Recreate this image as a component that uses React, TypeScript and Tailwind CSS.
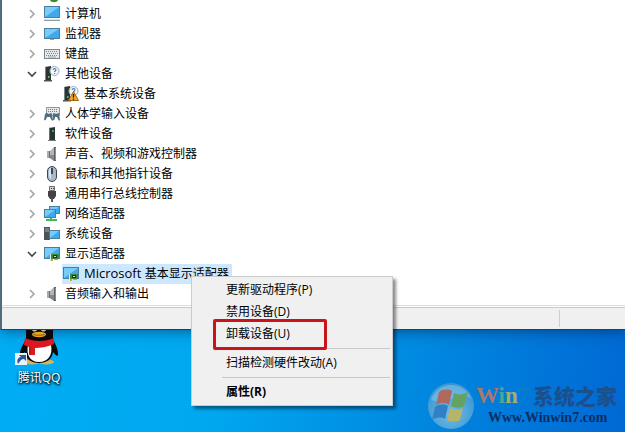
import type { ReactNode } from "react";

const Screen = ({ x = 0, y = 0, w = 16, h = 11 }) => (
  <g>
    <rect x={x} y={y} width={w} height={h} fill="#4b7d9c" />
    <rect x={x + 1} y={y + 1} width={w - 2} height={h - 2} fill="#3fa9ec" />
    <path
      d={`M${x + 1} ${y + h - 1}V${y + 1}H${x + w - 1}Z`}
      fill="#78ccfa"
    />
  </g>
);

const Tower = ({ question = false }) => (
  <g>
    <path d="M1 1l6-1v14H1z" fill="#2d3434" />
    <path d="M1 1l1-.3V14H1z" fill="#7b8787" />
    <path d="M0 14h8v1.500H0z" fill="#4d5353" />
    <rect x="4" y="10" width="1.500" height="2" fill="#52c46b" />
    {question && (
      <g>
        <circle cx="10.500" cy="5" r="4.500" fill="#f2f7fc" stroke="#9cacb9" />
        <path
          d="M9.200 4c0-2 2.900-1.800 2.700 0-.1 1-1.300 1-1.300 2.100M10.600 7v.9"
          fill="none"
          stroke="#3679ae"
          strokeWidth="1.100"
        />
      </g>
    )}
  </g>
);

const Speaker = () => (
  <g>
    <path d="M3 5h4v7H3z" fill="#6b6e70" />
    <path d="M3 5h2v7H3z" fill="#a9acae" />
    <path d="M6 5l4-4v14l-4-3z" fill="#b4b7b9" />
    <path d="M6 9h4v6l-4-3z" fill="#85898b" />
    <path d="M10 1h2v14h-2z" fill="#5e6264" />
    <path d="M11 2h1v12h-1z" fill="#8c9092" />
  </g>
);

const DisplayCard = () => (
  <g>
    <Screen y={1} h={12} />
    <path d="M6 8h1v7H6z" fill="#dfe5df" />
    <path d="M7 8h8v5H7z" fill="#3d8a3c" />
    <path d="M9 9h4v3H9z" fill="#1e3520" />
    <path d="M10 10h2v1h-2z" fill="#d9e2cf" />
    <path d="M7 13h2v2H7zM10 13h4v1h-4z" fill="#d2a62e" />
  </g>
);

const icons: Record<string, ReactNode> = {
  computer: (
    <g>
      <Screen y={0} h={12} />
      <path d="M0 14h16v1H0z" fill="#8f9ca4" />
      <path d="M0 13h16v1H0z" fill="#dbe3e8" />
    </g>
  ),
  monitor: (
    <g>
      <Screen y={2} h={11} />
      <path d="M6 13h4v1H6z" fill="#9aa7ae" />
    </g>
  ),
  keyboard: (
    <g>
      <rect x=".5" y="3.500" width="15" height="9" fill="#e6e9eb" stroke="#7d868b" />
      <path
        d="M2 5.500h12M3 7.500h11M2 9.500h12"
        stroke="#7b858b"
        strokeDasharray="1 1"
      />
      <path d="M4 11h8" stroke="#9ba3a8" />
    </g>
  ),
  unknown: <Tower question />,
  warning: (
    <g>
      <Tower question />
      <path d="M10.500 5.500L15.500 14.500h-10z" fill="#f3a72b" stroke="#a16512" />
      <path d="M10.500 8v3.500M10.500 12.500v1.200" stroke="#261b08" strokeWidth="1.300" />
    </g>
  ),
  hid: (
    <g>
      <path d="M2.500 1.500h13v8h-13z" fill="#e4e8ea" stroke="#8b989f" />
      <path d="M4 3.500h10M4 5.500h10" stroke="#75838c" strokeDasharray="1 1" />
      <path
        d="M1 8c2-2 3 0 4 0s2-2 3 0l1 6c-1 2-2-1-3-3H3c-1 2-1 4-3 3zM9 8c1-2 2 0 3 0s3-2 3 0l1 6c-1 2-2-1-3-3h-2c0 2-1 4-2 3z"
        fill="#536f7f"
      />
    </g>
  ),
  software: (
    <g>
      <path d="M5 2l6-1v13H5z" fill="#293431" />
      <path d="M5 2l1-.2V14H5z" fill="#66716e" />
      <path d="M4 14h8v1H4z" fill="#737c79" />
      <path d="M8 4h2v2H8z" fill="#43a351" />
    </g>
  ),
  speaker: <Speaker />,
  mouse: (
    <g>
      <rect x="3.500" y=".5" width="9" height="15" rx="4.500" fill="#a9b9ca" stroke="#3c4651" />
      <path d="M5 5c0-2 1-3 2-3v11c-2-1-2-4-2-7z" fill="#dce7f1" />
      <path d="M8 2v6" stroke="#242c34" strokeWidth="1.600" />
    </g>
  ),
  usb: (
    <g>
      <path d="M5.500.5h5v4h-5z" fill="#d7d7d7" stroke="#6e6e6e" />
      <path d="M7 2h1v1H7zM9 2h1v1H9z" fill="#333" />
      <path d="M4 5h8v5l-2 3H6l-2-3z" fill="#434343" />
      <path d="M8 12v4" stroke="#555" strokeWidth="2" />
    </g>
  ),
  network: (
    <g>
      <Screen x={5} y={0} w={11} h={8} />
      <Screen x={0} y={3} w={12} h={9} />
      <path d="M2 14h11M7 12v3" stroke="#42b65a" strokeWidth="2" />
    </g>
  ),
  system: (
    <g>
      <path d="M0 1h6v13H0z" fill="#4a5357" />
      <path d="M1 3h4M1 5h4" stroke="#a3adb1" />
      <Screen x={5} y={4} w={11} h={9} />
    </g>
  ),
  display: <DisplayCard />,
};

type Device = {
  name: string;
  icon: string;
  open?: boolean;
  child?: { vendor?: string; name: string; icon: string; selected?: boolean };
};

const devices: Device[] = [
  { name: "计算机", icon: "computer" },
  { name: "监视器", icon: "monitor" },
  { name: "键盘", icon: "keyboard" },
  {
    name: "其他设备",
    icon: "unknown",
    open: true,
    child: { name: "基本系统设备", icon: "warning" },
  },
  { name: "人体学输入设备", icon: "hid" },
  { name: "软件设备", icon: "software" },
  { name: "声音、视频和游戏控制器", icon: "speaker" },
  { name: "鼠标和其他指针设备", icon: "mouse" },
  { name: "通用串行总线控制器", icon: "usb" },
  { name: "网络适配器", icon: "network" },
  { name: "系统设备", icon: "system" },
  {
    name: "显示适配器",
    icon: "display",
    open: true,
    child: {
      vendor: "Microsoft",
      name: "基本显示适配器",
      icon: "display",
      selected: true,
    },
  },
  { name: "音频输入和输出", icon: "speaker" },
];

const DeviceIcon = ({ name }: { name: string }) => (
  <svg className="size-4 shrink-0" viewBox="0 0 16 16" aria-hidden="true">
    {icons[name]}
  </svg>
);

const DeviceTree = () => (
  <ul role="tree" aria-label="设备管理器" className="pl-6">
    {devices.map((device) => (
      <li key={device.name} role="treeitem" aria-expanded={!!device.open}>
        <div className="flex h-5 items-center">
          <button
            type="button"
            aria-label={device.name}
            className="flex size-4 items-center justify-center"
          >
            <svg className="size-3" viewBox="0 0 12 12" fill="none" aria-hidden="true">
              {device.open ? (
                <path d="M2 4l4 4 4-4" stroke="#444" strokeWidth="1.600" />
              ) : (
                <path d="M4 2l4 4-4 4" stroke="#a3a3a3" strokeWidth="1.600" />
              )}
            </svg>
          </button>
          <span className="ml-1 flex items-center gap-[5px]">
            <DeviceIcon name={device.icon} />
            {device.name}
          </span>
        </div>
        {device.child && (
          <ul role="group" className="pl-[38px]">
            <li
              role="treeitem"
              className={
                device.child.selected
                  ? "flex h-5 w-fit items-center gap-[5px] bg-[#cce8ff] pr-[3px] pl-px"
                  : "flex h-5 w-fit items-center gap-[5px] pr-[3px] pl-px"
              }
            >
              <DeviceIcon name={device.child.icon} />
              <span>
                {device.child.vendor && (
                  <span className="text-[13px]">{device.child.vendor} </span>
                )}
                {device.child.name}
              </span>
            </li>
          </ul>
        )}
      </li>
    ))}
  </ul>
);

const itemClass = "block h-[22px] w-full pl-8 text-left hover:bg-[#91c9f7]";

const ContextMenu = () => (
  <div
    role="menu"
    className="absolute top-[276px] left-[191px] w-[202px] border border-[#ccc] bg-[#f0f0f0] px-0.5 py-0.5 shadow-[3px_3px_3px_rgba(0,0,0,0.45)]"
  >
    <button type="button" role="menuitem" className={itemClass}>
      更新驱动程序(P)
    </button>
    <button type="button" role="menuitem" className={itemClass}>
      禁用设备(D)
    </button>
    <div className="relative">
      <button type="button" role="menuitem" className={itemClass}>
        卸载设备(U)
      </button>
      <span className="pointer-events-none absolute -top-1 left-[19px] h-[31px] w-[114px] rounded-xs border-3 border-[#c9141b]" />
    </div>
    <div role="separator" className="my-[3px] ml-7 h-px bg-[#c8c8c8]" />
    <button type="button" role="menuitem" className={itemClass}>
      扫描检测硬件改动(A)
    </button>
    <div role="separator" className="my-[3px] ml-7 h-px bg-[#c8c8c8]" />
    <button type="button" role="menuitem" className={`${itemClass} font-bold`}>
      属性(R)
    </button>
  </div>
);

const QQShortcut = () => (
  <button type="button" className="ml-3 flex w-[54px] flex-col items-center">
    <svg className="h-[38px] w-12" viewBox="0 2 48 38" aria-hidden="true">
      <ellipse cx="17" cy="34" rx="8" ry="2.500" fill="#d9b45c" />
      <ellipse cx="31" cy="34" rx="8" ry="2.500" fill="#d9b45c" />
      <path
        d="M11 0h27v10c1 5 5 9 5 16 0 3-2 2-5-2-1 7-6 11-14 11S11 31 10 24c-3 4-5 5-5 2 0-7 5-11 6-16z"
        fill="#090909"
      />
      <path d="M13 17h23c2 10-3 17-12 17S11 27 13 17z" fill="#fff" />
      <path d="M17 2c1 2 4 2 5 0zM26 2c1 2 4 2 5 0z" fill="#bbb" />
      <ellipse cx="24" cy="6.500" rx="7" ry="2.700" fill="#e3a71d" />
      <path d="M18 6.500c4 1 8 1 12 0" fill="none" stroke="#8e5d0f" />
      <path
        d="M10 10c9 4 20 4 29 0l0 6c-7 3-14 4-19 4v7h-6v-8l-5-2z"
        fill="#dc1920"
      />
      <path d="M15 19v7" stroke="#a80f15" />
      <rect x="0" y="25" width="12" height="12" fill="#edf2f6" />
      <path d="M3 36c-2-5 1-7 3-7l-2-2h7v6l-2-2c-3 0-4 2-6 5z" fill="#28589b" />
    </svg>
    <span className="text-xs leading-5 whitespace-nowrap text-white [text-shadow:1px_1px_2px_#000,0_1px_3px_#000]">
      腾讯QQ
    </span>
  </button>
);

const Watermark = () => (
  <div className="mt-auto mr-2 mb-px flex items-center">
    <svg className="size-[50px] opacity-80" viewBox="0 0 50 50" aria-hidden="true">
      <defs>
        <radialGradient id="orb" cx="50%" cy="65%" r="60%">
          <stop offset="0" stopColor="#8acbea" />
          <stop offset="1" stopColor="#4b9cce" />
        </radialGradient>
      </defs>
      <circle cx="25" cy="25" r="23" fill="url(#orb)" />
      <path d="M5 19C11 0 37-1 45 17 32 12 20 24 5 19z" fill="#9dd0ee" opacity=".6" />
      <path d="M13 11c4-3 9-3 13-1l-3 14c-4-3-9-3-13 0z" fill="#dd6341" />
      <path d="M28 12c4 2 9 2 14-1l-4 14c-4 2-9 2-13 0z" fill="#7cab45" />
      <path d="M9 26c4-3 9-3 13-1l-3 13c-4-2-9-2-13 1z" fill="#3c80c0" />
      <path d="M24 27c4 2 9 2 13 0l-3 12c-4 2-9 2-13 0z" fill="#e3c14c" />
    </svg>
    <div className="flex w-[141px] flex-col">
      <div className="flex h-6 items-center justify-between leading-6">
        <span className="font-['Liberation_Serif',serif] text-[23px] font-bold">
          <span className="text-[#a9786b]">W</span>
          <span className="text-[#4ba59a]">i</span>
          <span className="text-[#a9ad62]">n</span>
          <span className="text-[#087fc9]">7</span>
        </span>
        <span className="text-[21px] font-black text-[#1c508c]">系统之家</span>
      </div>
      <a
        href="#"
        className="ml-3 font-['Liberation_Serif',serif] text-sm leading-5 font-bold text-[#0c2e61]"
      >
        Www.Winwin7.com
      </a>
    </div>
  </div>
);

export default function App() {
  return (
    <main className="relative flex min-h-screen flex-col overflow-hidden bg-[linear-gradient(100deg,#00aef5_0%,#00a8f0_40%,#0088e0_70%,#0068d4_100%)] font-['Open_Sans','Noto_Sans_CJK_SC',sans-serif] text-xs text-black">
      <section className="border-b border-l-2 border-b-[#174568] border-l-[#526c79] bg-white shadow-[0_2px_12px_rgba(0,30,70,0.5)]">
        <div className="h-1 pl-12">
          <svg className="h-1 w-2" viewBox="0 0 8 4" aria-hidden="true">
            <path d="M0 0h8c-1 3-7 3-8 0z" fill="#3a8a38" />
          </svg>
        </div>
        <div className="-ml-0.5 pb-px">
          <DeviceTree />
        </div>
        <footer className="border-t border-[#dedede] pt-px">
          <div className="flex h-[22px] border-t border-[#c9c9c9] bg-[#f0f0f0] py-0.5">
            <div className="flex-1 border-r border-[#cecece]" />
            <div className="w-[65px]" />
          </div>
        </footer>
      </section>
      <div className="flex flex-1 justify-between">
        <QQShortcut />
        <Watermark />
      </div>
      <ContextMenu />
    </main>
  );
}
